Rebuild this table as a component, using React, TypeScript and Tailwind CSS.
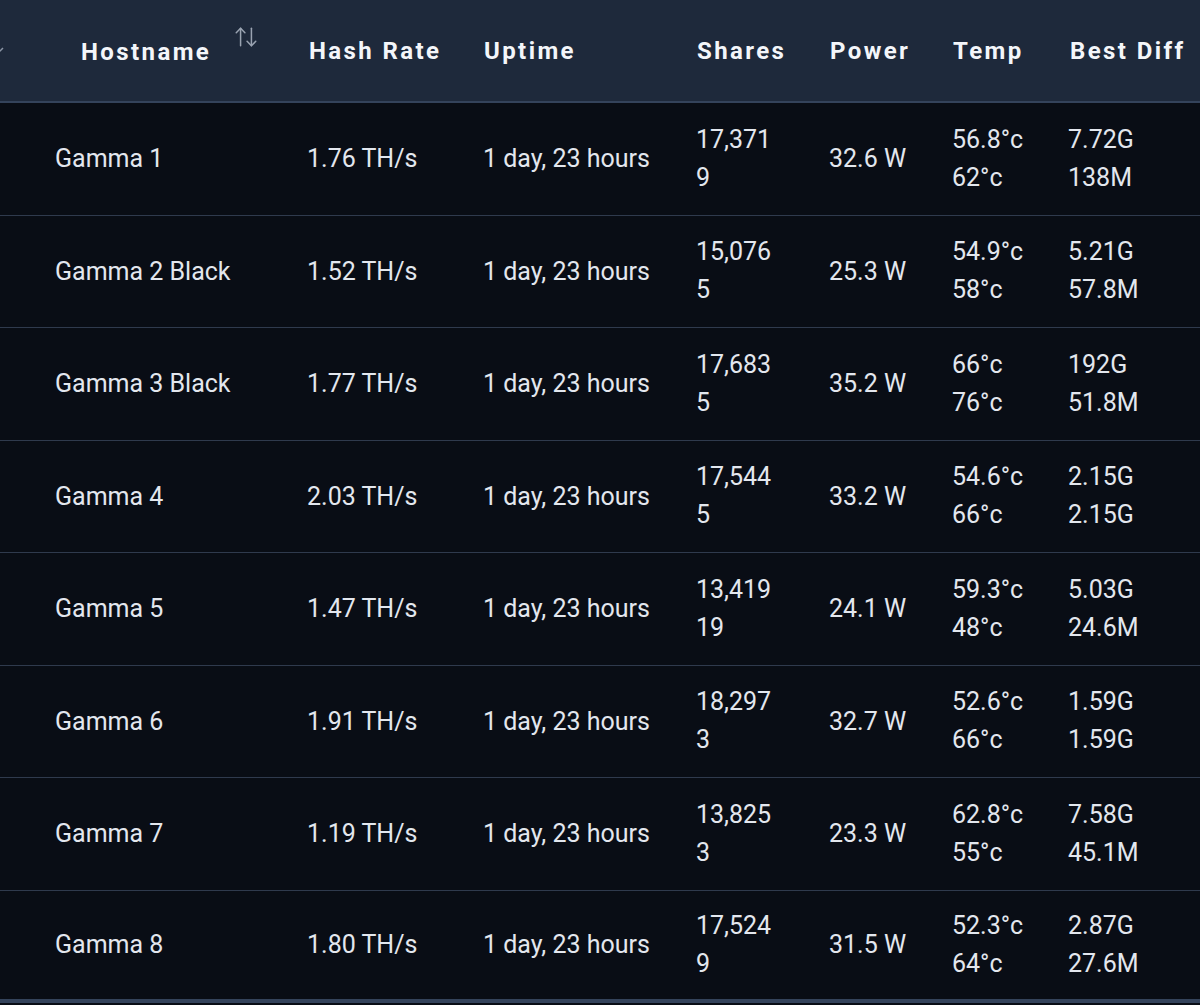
import { ArrowUpDown } from "lucide-react";

type Miner = {
  name: string;
  hash: string;
  uptime: string;
  shares: [string, string];
  power: string;
  temp: [string, string];
  diff: [string, string];
};

const miners: Miner[] = [
  { name: "Gamma 1", hash: "1.76 TH/s", uptime: "1 day, 23 hours", shares: ["17,371", "9"], power: "32.6 W", temp: ["56.8°c", "62°c"], diff: ["7.72G", "138M"] },
  { name: "Gamma 2 Black", hash: "1.52 TH/s", uptime: "1 day, 23 hours", shares: ["15,076", "5"], power: "25.3 W", temp: ["54.9°c", "58°c"], diff: ["5.21G", "57.8M"] },
  { name: "Gamma 3 Black", hash: "1.77 TH/s", uptime: "1 day, 23 hours", shares: ["17,683", "5"], power: "35.2 W", temp: ["66°c", "76°c"], diff: ["192G", "51.8M"] },
  { name: "Gamma 4", hash: "2.03 TH/s", uptime: "1 day, 23 hours", shares: ["17,544", "5"], power: "33.2 W", temp: ["54.6°c", "66°c"], diff: ["2.15G", "2.15G"] },
  { name: "Gamma 5", hash: "1.47 TH/s", uptime: "1 day, 23 hours", shares: ["13,419", "19"], power: "24.1 W", temp: ["59.3°c", "48°c"], diff: ["5.03G", "24.6M"] },
  { name: "Gamma 6", hash: "1.91 TH/s", uptime: "1 day, 23 hours", shares: ["18,297", "3"], power: "32.7 W", temp: ["52.6°c", "66°c"], diff: ["1.59G", "1.59G"] },
  { name: "Gamma 7", hash: "1.19 TH/s", uptime: "1 day, 23 hours", shares: ["13,825", "3"], power: "23.3 W", temp: ["62.8°c", "55°c"], diff: ["7.58G", "45.1M"] },
  { name: "Gamma 8", hash: "1.80 TH/s", uptime: "1 day, 23 hours", shares: ["17,524", "9"], power: "31.5 W", temp: ["52.3°c", "64°c"], diff: ["2.87G", "27.6M"] },
];

const cols = "grid grid-cols-[55px_252px_176px_213px_133px_123px_116px_1fr]";

function Stack({ lines }: { lines: [string, string] }) {
  return (
    <div className="flex flex-col leading-[38px]">
      <span>{lines[0]}</span>
      <span>{lines[1]}</span>
    </div>
  );
}

export default function App() {
  return (
    <div
      className="w-[1200px] h-[1005px] overflow-hidden bg-[#090d15]"
      style={{ fontFamily: "Roboto, 'Liberation Sans', sans-serif" }}
    >
      {/* Header */}
      <div className={`${cols} h-[103px] items-center bg-[#1e293b] border-b-2 border-[#34435b] text-[24px] font-bold tracking-[0.1em] text-[#f4f6fa]`}>
        <div className="relative h-full">
          <svg className="absolute left-[-6px] top-[46px] text-[#8b95a5]" width="10" height="8" viewBox="0 0 10 8" fill="none" stroke="currentColor" strokeWidth="1.5">
            <path d="M1 2l4 4 4-4" />
          </svg>
        </div>
        <div className="flex items-start pl-[26px]">
          <span className="pt-[2px]">Hostname</span>
          <ArrowUpDown className="ml-[22px] -mt-[8px] w-[26px] h-[26px] text-[#9aa3b1]" strokeWidth={1.4} />
        </div>
        <div className="pl-[2px]">Hash Rate</div>
        <div className="pl-[1px]">Uptime</div>
        <div className="pl-[1px]">Shares</div>
        <div className="pl-[1px]">Power</div>
        <div className="pl-[1px]">Temp</div>
        <div className="pl-[2px]">Best Diff</div>
      </div>

      {/* Rows */}
      {miners.map((m, i) => (
        <div
          key={m.name}
          className={`${cols} h-[112.5px] items-center text-[25px] text-[#e3e7ee] ${
            i === miners.length - 1 ? "border-b-4 border-[#34435b]" : "border-b border-[#2f3a4d]"
          }`}
        >
          <div />
          <div>{m.name}</div>
          <div>{m.hash}</div>
          <div>{m.uptime}</div>
          <Stack lines={m.shares} />
          <div>{m.power}</div>
          <Stack lines={m.temp} />
          <Stack lines={m.diff} />
        </div>
      ))}
    </div>
  );
}
